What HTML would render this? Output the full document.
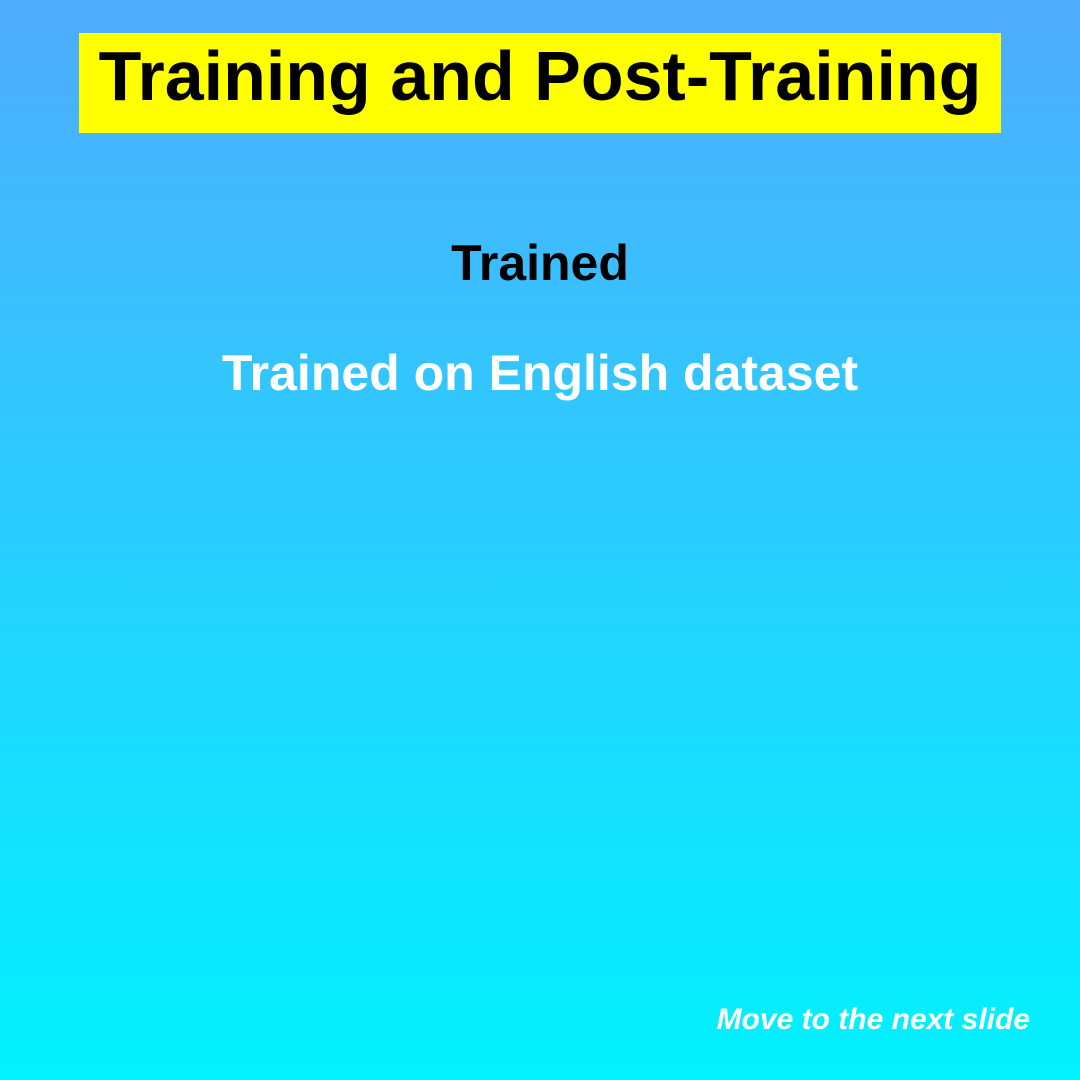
<!DOCTYPE html>
<html><head><meta charset="utf-8"><style>
html,body{margin:0;padding:0;}
body{width:1080px;height:1080px;background:linear-gradient(to bottom,#4facfe,#00f2fe);font-family:"Liberation Sans",Arial,sans-serif;position:relative;overflow:hidden;}
.title{position:absolute;left:79px;top:33px;width:922px;height:100px;background:#ffff00;text-align:center;font-weight:bold;font-size:70px;line-height:86px;color:#000;overflow:hidden;}
.h{position:absolute;left:0;width:1080px;text-align:center;font-weight:bold;}
.foot{position:absolute;right:50px;top:1003px;font-size:30px;font-weight:bold;font-style:italic;color:#fff;}
</style></head><body>
<div class="title">Training and Post-Training</div>
<div class="h" style="top:234px;font-size:50px;color:#000;">Trained</div>
<div class="h" style="top:344px;font-size:50px;color:#fff;">Trained on English dataset</div>
<div class="foot">Move to the next slide</div>
</body></html>
